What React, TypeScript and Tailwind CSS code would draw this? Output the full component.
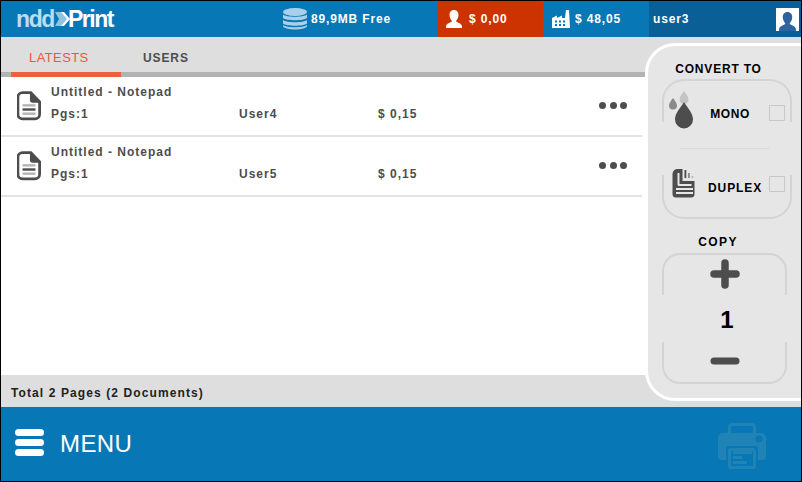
import React from "react";

const docs = [
  { title: "Untitled - Notepad", pages: "Pgs:1", user: "User4", price: "$ 0,15" },
  { title: "Untitled - Notepad", pages: "Pgs:1", user: "User5", price: "$ 0,15" },
];

function DocIcon() {
  return (
    <svg width="24" height="30" viewBox="0 0 26 32" className="mb-[1px] shrink-0">
      <path d="M6 1.500h9l9.500 10V25a5 5 0 0 1-5 5H6a5 5 0 0 1-5-5V6.500a5 5 0 0 1 5-5z" fill="#fff" stroke="#4d4d4d" strokeWidth="3" />
      <path d="M14 1.500h1.500l9 10v1H17a3 3 0 0 1-3-3z" fill="#4d4d4d" />
      <rect x="6" y="14" width="14" height="2.600" fill="#b5b5b5" />
      <rect x="6" y="18.500" width="14" height="2.600" fill="#4d4d4d" />
      <rect x="6" y="23" width="14" height="2.600" fill="#b5b5b5" />
    </svg>
  );
}

function Row({ doc }: { doc: (typeof docs)[number] }) {
  return (
    <div className="flex h-[60px] items-center border-b-2 border-[#e3e3e3] pl-[16px] pr-[15px]">
      <DocIcon />
      <div className="ml-[10px] flex-1 pb-[6px] text-[12px] font-bold tracking-[1px] text-[#4d4d4d]">
        <div className="h-[22px] leading-[22px]">{doc.title}</div>
        <div className="flex h-[22px] leading-[22px]">
          <span className="w-[188px]">{doc.pages}</span>
          <span className="w-[139px]">{doc.user}</span>
          <span>{doc.price}</span>
        </div>
      </div>
      <div className="flex gap-[3.5px] pb-[2px]">
        <span className="h-[7px] w-[7px] rounded-full bg-[#4d4d4d]" />
        <span className="h-[7px] w-[7px] rounded-full bg-[#4d4d4d]" />
        <span className="h-[7px] w-[7px] rounded-full bg-[#4d4d4d]" />
      </div>
    </div>
  );
}

function SidePanel() {
  return (
    <div className="absolute right-0 top-[42px] flex h-[358px] w-[156px] flex-col rounded-l-[30px] border-[3px] border-r-0 border-white bg-[#e6e6e6] text-black">
      <div className="mt-[14px] pr-[12px] text-center text-[12px] font-bold leading-[18px] tracking-[0.8px]">CONVERT TO</div>
      <div className="ml-[14px] mt-[1px] flex h-[43px] w-[130px] items-start rounded-t-[22px] border-2 border-b-0 border-[#d4d4d4] pt-[10px]">
        <svg width="44" height="42" viewBox="0 0 44 42" className="mt-[-1px] shrink-0">
          <path d="M9 8c2 3 4 5 4 7.500a4 4 0 0 1-8 0C5 13 7 11 9 8z" fill="#8a8a8a" />
          <path d="M20 1c2 3 4.500 5.500 4.500 8.500a4.500 4.500 0 0 1-9 0C15.500 6.500 18 4 20 1z" fill="#c4c4c4" />
          <path d="M20 12c3.500 6 9 11 9 17.500a9 9 0 0 1-18 0C11 23 16.500 18 20 12z" fill="#4d4d4d" />
        </svg>
        <span className="ml-[-3px] mt-[14px] w-[50px] text-center text-[12px] font-bold leading-[18px] tracking-[0.6px]">MONO</span>
        <span className="ml-[14px] mt-[14px] h-[16px] w-[16px] shrink-0 border border-[#c8c8c8]" />
      </div>
      <div className="ml-[32px] mt-[26px] h-px w-[90px] bg-[#dcdcdc]" />
      <div className="ml-[14px] mt-[26px] flex h-[44px] w-[130px] items-start rounded-b-[22px] border-2 border-t-0 border-[#d4d4d4]">
        <svg width="26" height="32" viewBox="0 0 26 32" className="ml-[7px] mt-[-8px] shrink-0">
          <path d="M7 2h4.500v12h12v13a3.500 3.500 0 0 1-3.500 3.500H5A3.500 3.500 0 0 1 1.500 27V7A5 5 0 0 1 7 2z" fill="#4d4d4d" />
          <path d="M6.500 6h2v11h12v2H8a1.500 1.500 0 0 1-1.500-1.500z" fill="#e6e6e6" />
          <rect x="5" y="21" width="17" height="2" fill="#e6e6e6" />
          <rect x="5" y="25" width="17" height="2" fill="#e6e6e6" />
          <rect x="13.500" y="3" width="1.800" height="8" fill="#4d4d4d" />
          <rect x="17" y="6" width="1.800" height="5" fill="#8a8a8a" />
          <rect x="20.500" y="9" width="1.800" height="2" fill="#b5b5b5" />
        </svg>
        <span className="ml-[11px] mt-[4px] text-[12px] font-bold leading-[18px] tracking-[0.9px]">DUPLEX</span>
        <span className="ml-[7px] mt-[1px] h-[16px] w-[16px] shrink-0 border border-[#c8c8c8]" />
      </div>
      <div className="mt-[14px] pr-[13px] text-center text-[12px] font-bold leading-[18px] tracking-[1.4px]">COPY</div>
      <div className="ml-[14px] mt-[2px] flex h-[42px] w-[125px] items-start justify-center rounded-t-[18px] border-2 border-b-0 border-[#d4d4d4] pt-[4px]">
        <svg width="30" height="30" viewBox="0 0 30 30">
          <path d="M15 4v22M4 15h22" stroke="#4d4d4d" strokeWidth="7.500" strokeLinecap="round" />
        </svg>
      </div>
      <div className="h-[47px] pl-[5px] text-center text-[24px] font-bold leading-[50px]">1</div>
      <div className="ml-[14px] flex h-[42px] w-[125px] items-start justify-center rounded-b-[18px] border-2 border-t-0 border-[#d4d4d4] pt-[15px]">
        <svg width="30" height="8" viewBox="0 0 30 8">
          <path d="M4 4h22" stroke="#4d4d4d" strokeWidth="7" strokeLinecap="round" />
        </svg>
      </div>
    </div>
  );
}

export default function App() {
  return (
    <div
      className="relative flex h-[482px] w-[802px] flex-col overflow-hidden border border-black bg-white"
      style={{ fontFamily: '"Liberation Sans", Arial, sans-serif' }}
    >
      {/* Header */}
      <div className="flex h-[36px] shrink-0 items-center bg-[#0877b6] text-[12px] font-bold tracking-[0.85px] text-white">
        <div className="flex w-[282px] items-center pl-[15px]">
          <span className="text-[23px] leading-none tracking-[-1.4px] text-[#bcdcef]">ndd</span>
          <svg width="16" height="16" viewBox="0 0 16 16" className="ml-[1px]">
            <path d="M0 1h7l6 7-6 7H0l4-7z" fill="#8fc3e2" />
            <path d="M6 1h3l6 7-6 7H6l6-7z" fill="#fff" />
          </svg>
          <span className="ml-[-3px] text-[23px] leading-none tracking-[-1.5px]">Print</span>
        </div>
        <div className="flex w-[154px] items-center">
          <svg width="24" height="22" viewBox="0 0 24 22" className="shrink-0">
            <ellipse cx="12" cy="4" rx="12" ry="4" fill="#a9d0ea" />
            <path d="M0 6.500c3 3 21 3 24 0V10c-3 3-21 3-24 0z" fill="#a9d0ea" />
            <path d="M0 12c3 3 21 3 24 0v3.500c-3 3-21 3-24 0z" fill="#a9d0ea" />
            <path d="M0 17c3 3 21 3 24 0v1.500c-3 4-21 4-24 0z" fill="#a9d0ea" />
          </svg>
          <span className="ml-[4px]">89,9MB Free</span>
        </div>
        <div className="flex h-full w-[106px] items-center bg-[#cd3300] pl-[9px]">
          <svg width="16" height="18" viewBox="0 0 16 18" className="shrink-0">
            <path d="M8 0c3 0 4.500 2.300 4.500 5S10.800 10 10 11c0 1.500 6 2 6 5.500V18H0v-1.500C0 13 6 12.500 6 11c-.8-1-2.500-3.300-2.500-6S5 0 8 0z" fill="#fff" />
          </svg>
          <span className="ml-[7px]">$ 0,00</span>
        </div>
        <div className="flex h-full w-[106px] items-center pl-[9px]">
          <svg width="18" height="18" viewBox="0 0 18 18" className="shrink-0">
            <path d="M0 8l5-2.500V8l5-2.500V8h3l1-8h3l1 18H0z" fill="#fff" />
            <path d="M3 10.500h2v2H3zM7 10.500h2v2H7zM11 10.500h2v2h-2zM3 14h2v2H3zM7 14h2v2H7zM11 14h2v2h-2z" fill="#0877b6" />
          </svg>
          <span className="ml-[5px]">$ 48,05</span>
        </div>
        <div className="flex h-full flex-1 items-center justify-between bg-[#0a5f97] pl-[4px] pr-[2px]">
          <span>user3</span>
          <div className="flex h-[23px] w-[23px] items-end justify-center overflow-hidden bg-white">
            <svg width="17" height="19" viewBox="0 0 16 18">
              <path d="M8 0c3 0 4.500 2.300 4.500 5S10.800 10 10 11c0 1.500 6 2 6 5.500V18H0v-1.500C0 13 6 12.500 6 11c-.8-1-2.500-3.300-2.500-6S5 0 8 0z" fill="#2f639f" />
            </svg>
          </div>
        </div>
      </div>

      {/* Tabs */}
      <div className="flex h-[40px] shrink-0 border-b-[5px] border-[#b3b3b3] bg-[#dedede] pl-[10px] text-[13px] tracking-[0.4px]">
        <div className="h-[40px] w-[110px] border-b-[5px] border-[#ee5f41] pl-[18px] pt-[12px] leading-[18px] text-[#e8593c]">LATESTS</div>
        <div className="pl-[22px] pt-[12px] text-[12px] font-bold leading-[18px] tracking-[0.9px] text-[#4d4d4d]">USERS</div>
      </div>

      {/* Document list */}
      <div className="min-h-0 w-[641px] flex-1 bg-white">
        {docs.map((doc, i) => (
          <Row key={i} doc={doc} />
        ))}
      </div>

      <div className="flex h-[32px] shrink-0 items-center bg-[#dedede] pl-[10px] pt-[4px] text-[12px] font-bold tracking-[1.1px] text-[#222]">
        Total 2 Pages (2 Documents)
      </div>

      {/* Menu bar */}
      <div className="flex h-[74px] shrink-0 items-center bg-[#0877b6] pl-[14px] pr-[35px]">
        <div className="mb-[3px] flex w-[29px] flex-col gap-[3px]">
          <span className="h-[7px] rounded-full bg-white" />
          <span className="h-[7px] rounded-full bg-white" />
          <span className="h-[7px] rounded-full bg-white" />
        </div>
        <span className="ml-[16px] flex-1 text-[24px] leading-none tracking-[0.4px] text-white">MENU</span>
        <svg width="48" height="48" viewBox="0 0 48 48" className="mt-[3px]">
          <path d="M10 14V5a4 4 0 0 1 4-4h20a4 4 0 0 1 4 4v9h-3V5a1 1 0 0 0-1-1H14a1 1 0 0 0-1 1v9z" fill="#1f83b6" />
          <path d="M5 11h38a5 5 0 0 1 5 5v18a4 4 0 0 1-4 4h-4V27a3 3 0 0 0-3-3H11a3 3 0 0 0-3 3v11H4a4 4 0 0 1-4-4V16a5 5 0 0 1 5-5z" fill="#1f83b6" />
          <circle cx="41" cy="17" r="3.500" fill="#0877b6" />
          <path d="M13 26h22a3 3 0 0 1 3 3v15a3 3 0 0 1-3 3H13a3 3 0 0 1-3-3V29a3 3 0 0 1 3-3zm0 3v15h22V29z" fill="#1f83b6" />
          <path d="M15 29h19v3H15zM15 34h9v3h-9zM15 39h14v3H15z" fill="#1f83b6" />
        </svg>
      </div>

      <SidePanel />
    </div>
  );
}
